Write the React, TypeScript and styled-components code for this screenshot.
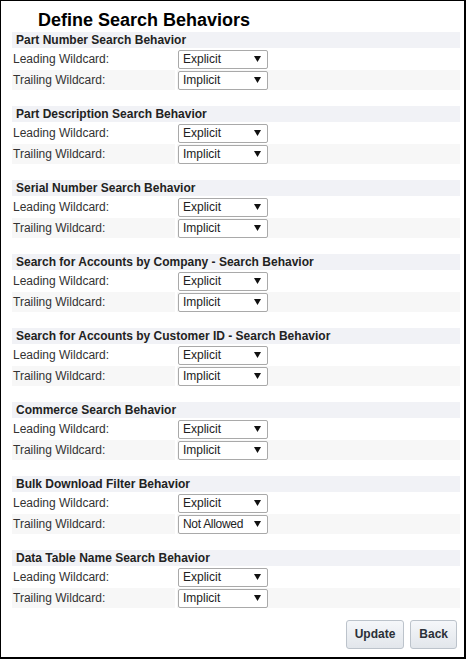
import React from "react";
import styled, { createGlobalStyle } from "styled-components";

const GlobalStyle = createGlobalStyle`
  html, body { margin: 0; padding: 0; background: #ffffff; }
  body { font-family: "Liberation Sans", Arial, sans-serif; }
  * { box-sizing: border-box; }
`;

const Frame = styled.div`
  width: 466px;
  height: 659px;
  border-left: 1px solid #000;
  border-top: 1px solid #000;
  border-right: 2px solid #000;
  border-bottom: 2px solid #000;
  background: #fff;
  padding: 9px 4px 0 11px;
  display: flex;
  flex-direction: column;
`;

const Title = styled.h1`
  margin: 0 0 1px 0;
  padding-left: 26px;
  font-family: "Liberation Sans", Arial, sans-serif;
  font-weight: bold;
  font-size: 18px;
  line-height: 21px;
  color: #000;
`;

const Sections = styled.div`
  display: flex;
  flex-direction: column;
  gap: 16px;
`;

const Section = styled.div`
  display: flex;
  flex-direction: column;
  gap: 1px;
`;

const Header = styled.div`
  height: 16px;
  line-height: 16px;
  padding-left: 4px;
  background: #f1f2f6;
  font-size: 12px;
  font-weight: bold;
  color: #222;
  white-space: nowrap;
`;

const Row = styled.div`
  display: grid;
  grid-template-columns: 163px 1fr;
  column-gap: 2px;
  height: 20px;
`;

const Cell = styled.div<{ $shaded: boolean }>`
  background: ${(p) => (p.$shaded ? "#f7f7f7" : "#ffffff")};
  display: flex;
  align-items: center;
`;

const Label = styled(Cell)`
  padding-left: 1px;
  font-size: 12px;
  line-height: 20px;
  color: #333;
`;

const SelectBox = styled.div<{ $value: string }>`
  margin-left: 1px;
  width: 90px;
  height: 19px;
  border: 1px solid #a9a9a9;
  border-radius: 2px;
  background: #fff;
  display: flex;
  align-items: center;
  justify-content: space-between;
  padding: 0 6px 0 4px;
  font-size: 12px;
  color: #222;
  white-space: nowrap;
  letter-spacing: ${(p) => (p.$value.length > 9 ? "-0.3px" : "0")};
`;

const Arrow = styled.svg`
  flex: none;
  display: block;
`;

const Footer = styled.div`
  display: flex;
  justify-content: flex-end;
  gap: 6px;
  margin-top: 12px;
  padding-right: 3px;
`;

const Button = styled.button`
  height: 29px;
  margin: 0;
  padding: 0 8px;
  border: 1px solid #bcc3cb;
  border-radius: 3px;
  background: linear-gradient(#f5f7fa, #e2e6eb);
  font-family: "Liberation Sans", Arial, sans-serif;
  font-size: 12px;
  font-weight: bold;
  line-height: 27px;
  color: #2b3038;
  cursor: pointer;
`;

type Behavior = { title: string; leading: string; trailing: string };

const sections: Behavior[] = [
  { title: "Part Number Search Behavior", leading: "Explicit", trailing: "Implicit" },
  { title: "Part Description Search Behavior", leading: "Explicit", trailing: "Implicit" },
  { title: "Serial Number Search Behavior", leading: "Explicit", trailing: "Implicit" },
  { title: "Search for Accounts by Company - Search Behavior", leading: "Explicit", trailing: "Implicit" },
  { title: "Search for Accounts by Customer ID - Search Behavior", leading: "Explicit", trailing: "Implicit" },
  { title: "Commerce Search Behavior", leading: "Explicit", trailing: "Implicit" },
  { title: "Bulk Download Filter Behavior", leading: "Explicit", trailing: "Not Allowed" },
  { title: "Data Table Name Search Behavior", leading: "Explicit", trailing: "Implicit" },
];

function Select({ value }: { value: string }) {
  return (
    <SelectBox $value={value}>
      <span>{value}</span>
      <Arrow width="7" height="6" viewBox="0 0 7 6">
        <polygon points="0,0 7,0 3.5,6" fill="#111" />
      </Arrow>
    </SelectBox>
  );
}

function FieldRow({ label, value, shaded }: { label: string; value: string; shaded: boolean }) {
  return (
    <Row>
      <Label $shaded={shaded}>{label}</Label>
      <Cell $shaded={shaded}>
        <Select value={value} />
      </Cell>
    </Row>
  );
}

export default function App() {
  return (
    <>
      <GlobalStyle />
      <Frame>
        <Title>Define Search Behaviors</Title>
        <Sections>
          {sections.map((s) => (
            <Section key={s.title}>
              <Header>{s.title}</Header>
              <FieldRow label="Leading Wildcard:" value={s.leading} shaded={false} />
              <FieldRow label="Trailing Wildcard:" value={s.trailing} shaded={true} />
            </Section>
          ))}
        </Sections>
        <Footer>
          <Button type="button">Update</Button>
          <Button type="button">Back</Button>
        </Footer>
      </Frame>
    </>
  );
}
